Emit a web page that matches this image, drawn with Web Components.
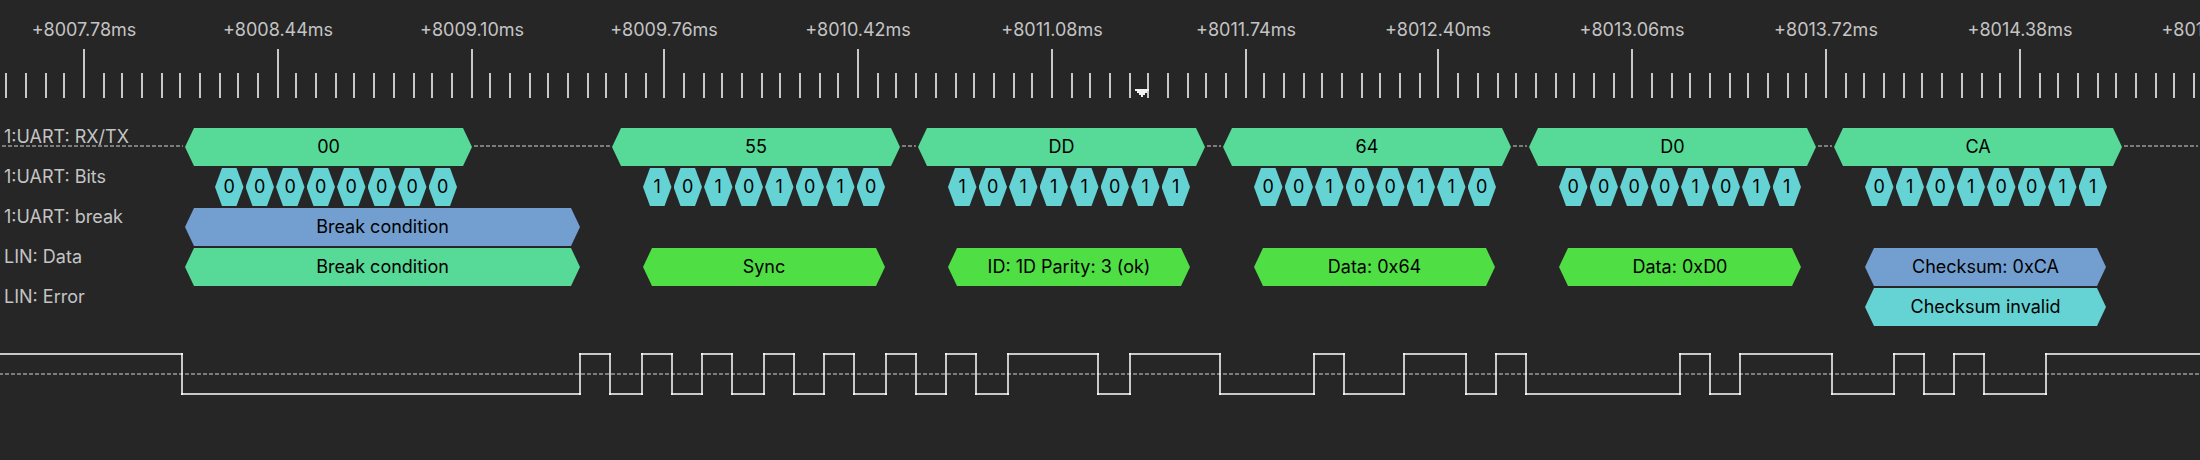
<!DOCTYPE html>
<html lang="en">
<head>
<meta charset="utf-8">
<title>Logic analyzer – UART / LIN decode</title>
<style>
  html { background: #262626; }
  body { margin: 0; background: #262626; color: #c4c4c4; font: 18px/20px Inter, "Noto Sans", sans-serif; font-optical-sizing: none; overflow-x: hidden; }
</style>
</head>
<body>
<logic-view>
  <time-ruler slot="ruler" labels="+8007.78ms +8008.44ms +8009.10ms +8009.76ms +8010.42ms +8011.08ms +8011.74ms +8012.40ms +8013.06ms +8013.72ms +8014.38ms +8015.04ms"></time-ruler>

  <decoder-lane label="1:UART: RX/TX" rail>
    <lane-block start="185" end="472" tone="mint">00</lane-block>
    <lane-block start="612" end="900" tone="mint">55</lane-block>
    <lane-block start="918" end="1205" tone="mint">DD</lane-block>
    <lane-block start="1223" end="1511" tone="mint">64</lane-block>
    <lane-block start="1529" end="1816" tone="mint">D0</lane-block>
    <lane-block start="1834" end="2122" tone="mint">CA</lane-block>
  </decoder-lane>
  <decoder-lane label="1:UART: Bits">
    <bit-group start="215" end="457" bits="00000000"></bit-group>
    <bit-group start="643" end="885" bits="10101010"></bit-group>
    <bit-group start="948" end="1190" bits="10111011"></bit-group>
    <bit-group start="1254" end="1496" bits="00100110"></bit-group>
    <bit-group start="1559" end="1801" bits="00001011"></bit-group>
    <bit-group start="1865" end="2107" bits="01010011"></bit-group>
  </decoder-lane>
  <decoder-lane label="1:UART: break">
    <lane-block start="185" end="580" tone="blue">Break condition</lane-block>
  </decoder-lane>
  <decoder-lane label="LIN: Data">
    <lane-block start="185" end="580" tone="mint">Break condition</lane-block>
    <lane-block start="643" end="885" tone="lime">Sync</lane-block>
    <lane-block start="948" end="1190" tone="lime">ID: 1D Parity: 3 (ok)</lane-block>
    <lane-block start="1254" end="1495" tone="lime">Data: 0x64</lane-block>
    <lane-block start="1559" end="1801" tone="lime">Data: 0xD0</lane-block>
    <lane-block start="1865" end="2106" tone="blue">Checksum: 0xCA</lane-block>
  </decoder-lane>
  <decoder-lane label="LIN: Error">
    <lane-block start="1865" end="2106" tone="cyan">Checksum invalid</lane-block>
  </decoder-lane>

  <logic-trace slot="trace" edges="182 580 610 642 672 702 732 764 794 824 854 886 916 946 976 1008 1098 1130 1220 1314 1344 1404 1466 1496 1526 1680 1710 1740 1832 1894 1924 1954 1984 2046"></logic-trace>
</logic-view>

<script>
// Length of the visible time range, in timeline units.
const SPAN = 2200;

// Position of the n-th ruler tick, rounded to an even timeline unit.
const tickAt = n => Math.round(41.96 + n * 9.679) * 2;

class LogicView extends HTMLElement {
  constructor() {
    super();
    this.attachShadow({ mode: "open" }).innerHTML = `
      <style>
        :host { display: block; overflow: hidden; }
        .lanes { display: grid; gap: 2px; padding: 30px 0 27px; }
      </style>
      <slot name="ruler"></slot>
      <div class="lanes"><slot></slot></div>
      <slot name="trace"></slot>`;
  }
}

class TimeRuler extends HTMLElement {
  connectedCallback() {
    const labels = this.getAttribute("labels").split(" ");
    const centers = labels.map((_, i) => tickAt(i * 10));
    // The label track runs past the right edge, so that the last label is cut off there.
    const track = SPAN * 1.1;
    const columns = [0, ...centers, track];
    const template = columns.slice(1).map((x, i) => `minmax(0, ${x - columns[i]}fr)`).join(" ");
    let ticks = "";
    for (let n = -4; n < 110; n++) {
      const major = n % 10 === 0;
      ticks += `<rect x="${tickAt(n) - 1}" y="${major ? 0 : 24}" width="2" height="${major ? 49 : 25}"/>`;
    }
    this.attachShadow({ mode: "open" }).innerHTML = `
      <style>
        :host { display: block; padding-top: 20px; }
        .labels { display: grid; grid-template-columns: ${template}; width: 110%; height: 29px; }
        .labels span { display: flex; justify-content: center; width: 0; white-space: nowrap; }
        svg { display: block; width: 100%; height: 49px; fill: #c8c8c8; }
        .cursor { fill: #f2f2f2; }
      </style>
      <div class="labels">${labels.map((t, i) => `<span style="grid-column:${i + 2}">${t}</span>`).join("")}</div>
      <svg viewBox="0 0 ${SPAN} 49" preserveAspectRatio="none" shape-rendering="crispEdges" aria-hidden="true">
        ${ticks}<path class="cursor" d="M1135 40h14v2h-2v2h-2v2h-2v2h-2v-2h-2v-2h-2v-2h-2z"/>
      </svg>`;
  }
}

class DecoderLane extends HTMLElement {
  connectedCallback() {
    const items = [...this.children];
    const stops = [0];
    for (const el of items) stops.push(+el.getAttribute("start"), +el.getAttribute("end"));
    stops.push(SPAN);
    items.forEach((el, i) => { el.style.gridColumn = 2 * i + 2; });
    const template = stops.slice(1).map((x, i) => `minmax(0, ${x - stops[i]}fr)`).join(" ");
    let rails = "";
    if (this.hasAttribute("rail")) {
      for (let i = 0; i <= items.length; i++) rails += `<i style="grid-column:${2 * i + 1}"></i>`;
    }
    this.attachShadow({ mode: "open" }).innerHTML = `
      <style>
        :host { display: grid; grid-template: 38px / minmax(0, 1fr); }
        .label, .track { grid-area: 1 / 1; }
        .label { z-index: 1; padding-left: 4px; line-height: 18px; }
        .track { display: grid; grid-template: 38px / ${template}; }
        i, ::slotted(*) { grid-row: 1; }
        i { height: 2px; margin: 17px 2px 0 0; background: repeating-linear-gradient(90deg, transparent 0 2px, #7c7c7c 2px 6px); }
      </style>
      <span class="label">${this.getAttribute("label")}</span>
      <div class="track">${rails}<slot></slot></div>`;
  }
}

class LaneBlock extends HTMLElement {
  constructor() {
    super();
    this.attachShadow({ mode: "open" }).innerHTML = `
      <style>
        :host {
          --notch: 9px;
          display: flex; align-items: center; justify-content: center;
          white-space: nowrap; color: #000; background: #57d997;
          clip-path: polygon(0 50%, var(--notch) 0, calc(100% - var(--notch)) 0, 100% 50%, calc(100% - var(--notch)) 100%, var(--notch) 100%);
        }
        :host([tone="blue"]) { background: #739fd0; }
        :host([tone="lime"]) { background: #4fde44; }
        :host([tone="cyan"]) { background: #65d3d4; }
      </style>
      <slot></slot>`;
  }
}

class BitGroup extends HTMLElement {
  connectedCallback() {
    this.attachShadow({ mode: "open" }).innerHTML = `
      <style>
        :host { display: grid; grid-template-columns: repeat(8, minmax(0, 1fr)); gap: 2px; }
        span {
          display: flex; align-items: center; justify-content: center;
          color: #000; background: #65d3d4;
          clip-path: polygon(0 50%, 7px 0, calc(100% - 7px) 0, 100% 50%, calc(100% - 7px) 100%, 7px 100%);
        }
      </style>
      ${[...this.getAttribute("bits")].map(b => `<span>${b}</span>`).join("")}`;
  }
}

class LogicTrace extends HTMLElement {
  connectedCallback() {
    const edges = this.getAttribute("edges").split(" ").map(Number);
    let shapes = "", from = 0, high = true;
    for (const x of [...edges, SPAN]) {
      shapes += `<rect x="${from ? from - 1 : 0}" y="${high ? 0 : 40}" width="${x - from + (from ? 2 : 1)}" height="2"/>`;
      if (x < SPAN) shapes += `<rect x="${x - 1}" y="0" width="2" height="42"/>`;
      from = x;
      high = !high;
    }
    this.attachShadow({ mode: "open" }).innerHTML = `
      <style>
        :host { display: block; }
        svg { display: block; width: 100%; height: 42px; fill: rgba(255, 255, 255, .75); }
        line { stroke: rgba(255, 255, 255, .4); stroke-width: 2; stroke-dasharray: 4 2; stroke-dashoffset: 1; }
      </style>
      <svg viewBox="0 0 ${SPAN} 42" preserveAspectRatio="none" shape-rendering="crispEdges" aria-hidden="true">
        <line x1="0" y1="21" x2="${SPAN}" y2="21"/>${shapes}
      </svg>`;
  }
}

customElements.define("logic-view", LogicView);
customElements.define("time-ruler", TimeRuler);
customElements.define("decoder-lane", DecoderLane);
customElements.define("lane-block", LaneBlock);
customElements.define("bit-group", BitGroup);
customElements.define("logic-trace", LogicTrace);
</script>
</body>
</html>
